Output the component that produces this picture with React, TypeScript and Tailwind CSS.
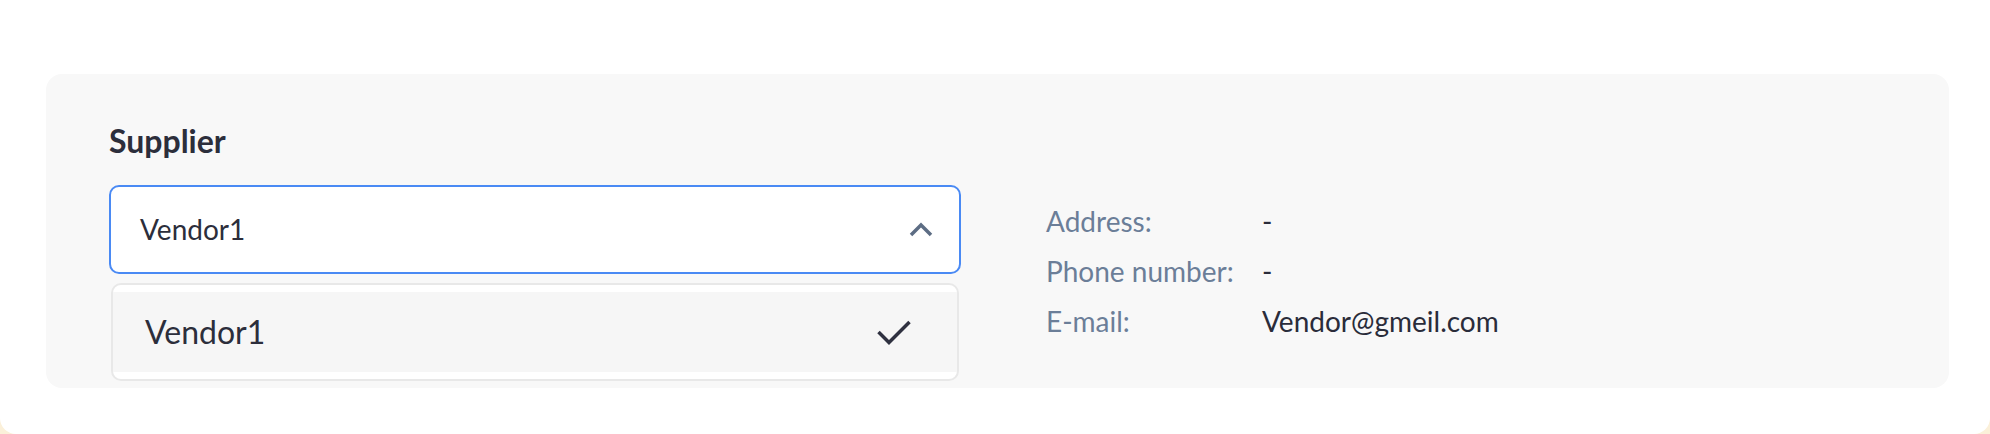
export default function App() {
  const details = [
    { label: "Address:", value: "-" },
    { label: "Phone number:", value: "-" },
    { label: "E-mail:", value: "Vendor@gmeil.com" },
  ];

  return (
    <div className="h-[434px] bg-[#fbf0d9] font-['Lato',sans-serif]">
      <div className="h-full bg-white rounded-b-[16px] pt-[74px] pl-[46px] pr-[41px]">
        <div className="h-[314px] rounded-[16px] bg-[#f8f8f8] pt-[46.5px] pl-[63px] flex items-start">
          {/* Supplier select */}
          <div className="w-[852px] flex flex-col">
            <div className="text-[32px] leading-[40px] font-bold text-[#2c2e3b]">Supplier</div>
            <div className="mt-[24px] h-[89px] rounded-[10px] border-2 border-[#4a8af4] bg-white flex items-center justify-between pl-[29px] pr-[26px]">
              <span className="text-[28px] leading-[34px] text-[#2c2e3b]">Vendor1</span>
              <svg width="24" height="15" viewBox="0 0 24 15" fill="none">
                <polyline points="2,13 12,3 22,13" stroke="#5d6d84" strokeWidth="3.5" />
              </svg>
            </div>
            <div className="mt-[9.5px] mx-[2px] rounded-[10px] border-2 border-[#e8e8e8] bg-white py-[7px]">
              <div className="h-[80px] bg-[#f6f6f6] flex items-center justify-between pl-[32px] pr-[46px]">
                <span className="text-[32px] leading-[38px] text-[#2c2e3b]">Vendor1</span>
                <svg width="34" height="25" viewBox="0 0 34 25" fill="none">
                  <polyline points="1.5,12 12,22.5 32.5,2" stroke="#2f3140" strokeWidth="3.5" />
                </svg>
              </div>
            </div>
          </div>

          {/* Supplier details */}
          <div className="ml-[85px] mt-[75.5px] grid grid-cols-[216px_auto] text-[28px] leading-[50px]">
            {details.map((d) => (
              <div key={d.label} className="contents">
                <span className="text-[#6b7e98]">{d.label}</span>
                <span className="text-[#2a2c3a]">{d.value}</span>
              </div>
            ))}
          </div>
        </div>
      </div>
    </div>
  );
}
